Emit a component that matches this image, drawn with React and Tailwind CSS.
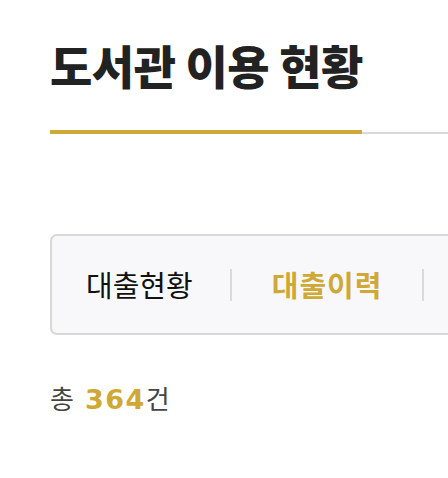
export default function App() {
  return (
    <div className="w-[448px] h-[478px] overflow-hidden bg-white font-['Noto_Sans_CJK_KR','Noto_Sans',sans-serif]">
      <div className="w-[560px] pl-[50px]">
        <div className="pt-[35px] relative border-b-2 border-[#d9d9d9]">
          <h1 className="text-[46px] leading-[58px] font-black text-[#222] tracking-[-0.5px] pb-[39px]">도서관 이용 현황</h1>
          <div className="absolute left-0 bottom-[-2px] w-[312px] h-[4px] bg-[#cfa935]"></div>
        </div>

        <div className="mt-[100px] h-[101px] flex items-center rounded-[7px] border-2 border-[#d8d8d8] bg-[#f8f8fa] pl-[34px]">
          <div className="text-[29px] text-[#111] leading-none pr-[37px]">대출현황</div>
          <div className="w-[2px] h-[32px] bg-[#dadada]"></div>
          <div className="text-[29px] font-bold text-[#cfa935] leading-none px-[40px] tracking-[1px]">대출이력</div>
          <div className="w-[2px] h-[32px] bg-[#dadada]"></div>
        </div>

        <div className="mt-[50px] text-[26px] text-[#444] leading-none flex items-baseline">
          <span className="mr-[11px]">총</span>
          <span className="font-['DejaVu_Sans',sans-serif] font-bold text-[27px] text-[#cfa935] tracking-[1.5px]">364</span>
          <span>건</span>
        </div>
      </div>
    </div>
  );
}
